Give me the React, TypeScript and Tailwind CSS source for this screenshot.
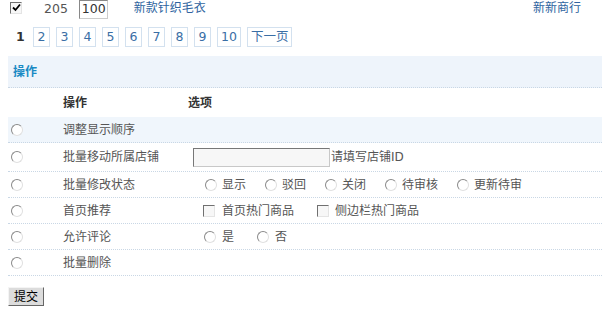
import React from 'react';

const font = { fontFamily: '"DejaVu Sans", "Noto Sans CJK SC", sans-serif' };

function Radio() {
  return (
    <span className="inline-block w-[12px] h-[12px] rounded-full border border-[#8a8a8a] border-r-[#e0e0e0] border-b-[#e0e0e0] bg-white shrink-0" />
  );
}

function Box({ checked = false }: { checked?: boolean }) {
  return (
    <span className="inline-flex items-center justify-center w-[12px] h-[12px] border border-[#707070] border-r-[#e4e4e4] border-b-[#e4e4e4] bg-[#f7f7f7] shrink-0">
      {checked && (
        <svg width="9" height="9" viewBox="0 0 9 9">
          <path d="M1 4.5 L3.5 7 L8 1.5" stroke="#000" strokeWidth="1.8" fill="none" />
        </svg>
      )}
    </span>
  );
}

function Row({ label, bg = false, tall = false, children }: { label: string; bg?: boolean; tall?: boolean; children?: React.ReactNode }) {
  return (
    <div
      className={`flex items-center border-b border-dotted border-[#c9d7e5] ${tall ? 'h-[29px]' : 'h-[26px]'} ${bg ? 'bg-[#f0f6fc]' : ''}`}
    >
      <div className="w-[55px] pl-[3px] flex items-center">
        <Radio />
      </div>
      <div className="w-[125px]">{label}</div>
      <div className="flex items-center">{children}</div>
    </div>
  );
}

export default function App() {
  const pages = ['2', '3', '4', '5', '6', '7', '8', '9', '10', '下一页'];

  return (
    <div className="w-[602px] h-[316px] bg-white text-[12px] text-[#555] leading-none overflow-hidden" style={font}>
      {/* Top line */}
      <div className="h-[19px] flex items-center">
        <div className="ml-[10px] mt-[-3px]">
          <Box checked />
        </div>
        <span className="ml-[22px] text-[12.5px]">205</span>
        <span className="ml-[11px] w-[29px] h-[19px] flex items-center pl-[2px] border border-[#888] border-r-[#ccc] border-b-[#ccc] text-[#333] text-[12.5px]">
          100
        </span>
        <span className="ml-[26px] text-[#2f64a0] mt-[-4px]">新款针织毛衣</span>
        <span className="ml-auto mr-[21px] text-[#2f64a0] mt-[-4px]">新新商行</span>
      </div>

      {/* Pagination */}
      <div className="mt-[8px] h-[20px] flex items-center">
        <span className="ml-[16px] w-[17px] font-bold text-[#333] text-[12.5px]">1</span>
        {pages.map((p) => (
          <span
            key={p}
            className="h-[20px] min-w-[17px] px-[3px] mr-[6px] flex items-center justify-center border border-[#d3e1ef] text-[#3a6ea5] text-[12.5px]"
          >
            {p}
          </span>
        ))}
      </div>

      {/* Table */}
      <div className="ml-[8px] mt-[9px]">
        <div className="h-[32px] bg-[#eef4fb] border-b border-dotted border-[#c9d7e5] flex items-center pl-[5px] font-bold text-[#1a8ac4]">
          操作
        </div>
        <div className="h-[29px] flex items-center font-bold text-[#333]">
          <div className="w-[55px]" />
          <div className="w-[125px]">操作</div>
          <div>选项</div>
        </div>
        <Row label="调整显示顺序" bg />
        <Row label="批量移动所属店铺" tall>
          <span className="ml-[5px] w-[137px] h-[19px] border border-[#777] border-r-[#c8c8c8] border-b-[#c8c8c8] bg-[#f7f7f7]" />
          <span className="ml-[1px]">请填写店铺ID</span>
        </Row>
        <Row label="批量修改状态">
          {['显示', '驳回', '关闭', '待审核', '更新待审'].map((t, i) => (
            <span key={t} className={`flex items-center ${i === 0 ? 'ml-[17px]' : 'ml-[19px]'}`}>
              <Radio />
              <span className="ml-[5px]">{t}</span>
            </span>
          ))}
        </Row>
        <Row label="首页推荐">
          <span className="flex items-center ml-[15px]">
            <Box />
            <span className="ml-[7px]">首页热门商品</span>
          </span>
          <span className="flex items-center ml-[23px]">
            <Box />
            <span className="ml-[6px]">侧边栏热门商品</span>
          </span>
        </Row>
        <Row label="允许评论">
          <span className="flex items-center ml-[16px]">
            <Radio />
            <span className="ml-[6px]">是</span>
          </span>
          <span className="flex items-center ml-[23px]">
            <Radio />
            <span className="ml-[6px]">否</span>
          </span>
        </Row>
        <Row label="批量删除" />
      </div>

      {/* Submit */}
      <button className="ml-[8px] mt-[11px] w-[36px] h-[19px] bg-[#dcdcdc] border border-[#f4f4f4] border-r-[#666] border-b-[#666] text-[#000] text-[12px] flex items-center justify-center">
        提交
      </button>
    </div>
  );
}
